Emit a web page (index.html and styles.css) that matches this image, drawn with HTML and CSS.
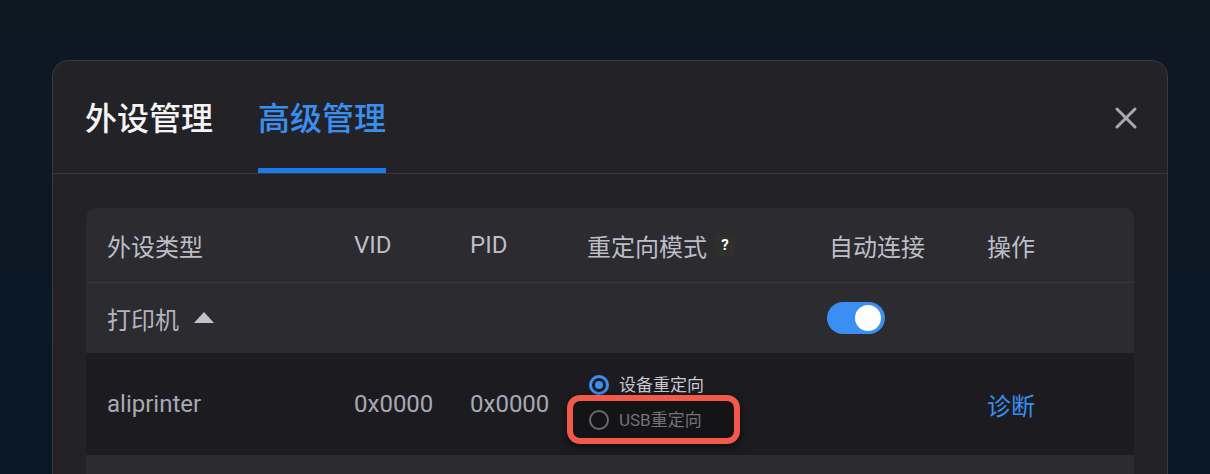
FILE: index.html
```html
<!DOCTYPE html>
<html lang="zh-CN">
<head>
    <meta charset="UTF-8">
    <meta name="viewport" content="width=device-width, initial-scale=1.0">
    <title>外设管理</title>
    <link rel="stylesheet" href="styles.css">
</head>
<body>
    <div class="modal">
        <div class="modal-header">
            <div class="tab">外设管理</div>
            <div class="tab active">高级管理</div>
            <button class="close" aria-label="关闭">
                <svg width="22" height="22" viewBox="0 0 22 22"><path d="M2 2 L20 20 M20 2 L2 20" stroke="currentColor" stroke-width="3" stroke-linecap="round"/></svg>
            </button>
        </div>

        <div class="table">
            <div class="row head">
                <div>外设类型</div>
                <div>VID</div>
                <div>PID</div>
                <div class="mode">重定向模式 <span class="help">?</span></div>
                <div>自动连接</div>
                <div>操作</div>
            </div>

            <!-- group row -->
            <div class="row group">
                <div class="group-name">打印机 <span class="caret"></span></div>
                <div></div>
                <div></div>
                <div></div>
                <div><span class="switch on"><span class="knob"></span></span></div>
                <div></div>
            </div>

            <div class="row device">
                <div>aliprinter</div>
                <div>0x0000</div>
                <div>0x0000</div>
                <div class="radios">
                    <label class="radio checked"><span class="dot"></span>设备重定向</label>
                    <label class="radio marked"><span class="dot"></span>USB重定向</label>
                </div>
                <div></div>
                <div><a class="link" href="#">诊断</a></div>
            </div>

            <div class="row device-next"></div>
        </div>
    </div>
</body>
</html>
```

FILE: styles.css
```css
body {
    margin: 0;
    height: 474px;
    overflow: hidden;
    font-family: "Roboto", "Noto Sans CJK SC", sans-serif;
    background: linear-gradient(180deg, #0d1823 0%, #0a1826 100%);
    padding: 60px 42px 0 52px;
    box-sizing: border-box;
}

/* Modal */
.modal {
    background: #232327;
    border: 1px solid #38393e;
    border-radius: 16px;
    min-height: 520px;
    box-sizing: border-box;
}

.modal-header {
    display: flex;
    align-items: flex-end;
    gap: 45px;
    padding: 0 30px 0 32px;
    border-bottom: 1px solid #38383d;
}

.tab {
    font-size: 32px;
    line-height: 32px;
    font-weight: 500;
    color: #f4f4f6;
    padding: 42px 0 33px;
    border-bottom: 5px solid transparent;
}

.tab.active {
    color: #3a8ef0;
    border-bottom-color: #1c7be9;
}

.close {
    margin-left: auto;
    align-self: flex-start;
    margin-top: 46px;
    padding: 0;
    border: none;
    background: none;
    color: #a8a8b3;
    width: 22px;
    height: 22px;
    cursor: pointer;
}

.close svg {
    display: block;
}

/* Table */
.table {
    margin: 34px 33px 0 33px;
    background: #2b2b30;
    border-radius: 10px;
    overflow: hidden;
}

.row {
    display: grid;
    grid-template-columns: 247px 116px 117px 242px 158px 1fr;
    align-items: center;
    padding-left: 21px;
    font-size: 24px;
    color: #a9a8b3;
}

.row.head {
    height: 74px;
    color: #bebdc8;
    border-bottom: 1px solid #38383e;
}

.mode {
    display: flex;
    align-items: center;
}

.help {
    display: inline-flex;
    align-items: center;
    justify-content: center;
    width: 20px;
    height: 21px;
    margin-left: 8px;
    background: #30302b;
    border-radius: 3px;
    color: #fff;
    font-size: 15px;
    font-weight: bold;
}

.row.group {
    height: 70px;
    color: #b4b3be;
}

.group-name {
    display: flex;
    align-items: center;
    gap: 15px;
}

.caret {
    width: 0;
    height: 0;
    border-left: 10px solid transparent;
    border-right: 10px solid transparent;
    border-bottom: 11px solid #c2c1cc;
    margin-top: -2px;
}

.switch {
    display: block;
    width: 58px;
    height: 32px;
    margin-left: -2px;
    border-radius: 16px;
    background: #3b8ff2;
    position: relative;
}

.switch .knob {
    position: absolute;
    top: 3px;
    right: 4px;
    width: 26px;
    height: 26px;
    border-radius: 50%;
    background: #fff;
}

.row.device {
    height: 102px;
    background: #1c1c20;
}

.radios {
    display: flex;
    flex-direction: column;
    gap: 15px;
    padding-left: 2px;
    margin-top: -4px;
}

.radio {
    position: relative;
    display: flex;
    align-items: center;
    gap: 10px;
    font-size: 17px;
    line-height: 20px;
    color: #c9c8d1;
}

.radio .dot {
    position: relative;
    box-sizing: border-box;
    width: 20px;
    height: 20px;
    border-radius: 50%;
    border: 2px solid #69696e;
}

.radio.checked .dot {
    border: 3px solid #3a8ff0;
}

.radio.checked .dot::after {
    content: "";
    position: absolute;
    top: 3px;
    left: 3px;
    width: 8px;
    height: 8px;
    border-radius: 50%;
    background: #3a8ff0;
}

.radio.marked {
    color: #727277;
    z-index: 0;
}

/* annotation box */
.radio.marked::before {
    content: "";
    position: absolute;
    z-index: -1;
    left: -22px;
    top: -15px;
    width: 173px;
    height: 49px;
    box-sizing: border-box;
    border: 6px solid #f2594b;
    border-radius: 13px;
    background: #141417;
    box-shadow: 0 3px 8px rgba(0, 0, 0, 0.6);
}

.link {
    color: #3a8ef0;
    text-decoration: none;
}

.row.device-next {
    height: 40px;
    background: #2b2b30;
}
```
